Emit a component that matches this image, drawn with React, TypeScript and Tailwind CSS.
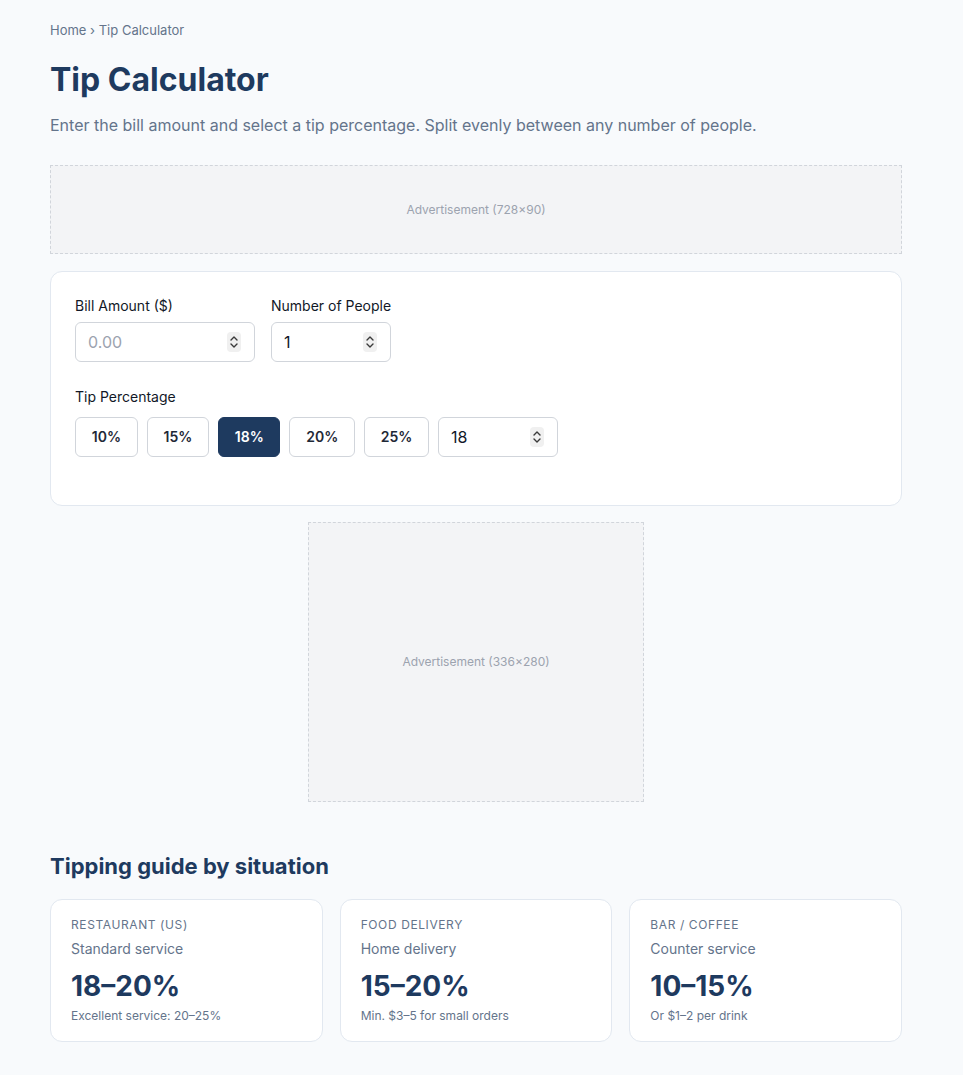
const tips = ['10%', '15%', '18%', '20%', '25%']

const guides = [
  { label: 'Restaurant (US)', sub: 'Standard service', range: '18–20%', note: 'Excellent service: 20–25%' },
  { label: 'Food delivery', sub: 'Home delivery', range: '15–20%', note: 'Min. $3–5 for small orders' },
  { label: 'Bar / coffee', sub: 'Counter service', range: '10–15%', note: 'Or $1–2 per drink' },
]

function Spinner() {
  return (
    <span className="absolute right-[14px] top-1/2 -translate-y-1/2 flex items-center justify-center w-[14px] h-[20px] rounded-[4px] bg-[#f0f0f0]">
      <svg width="12" height="16" viewBox="0 0 12 16" fill="none" stroke="#3a3a3a" strokeWidth="1.4" strokeLinecap="round" strokeLinejoin="round">
        <path d="M3 6 L6 3 L9 6" />
        <path d="M3 10 L6 13 L9 10" />
      </svg>
    </span>
  )
}

function NumberField({ value, placeholder, width }: { value?: string; placeholder?: string; width: string }) {
  return (
    <div className={`relative ${width} h-10`}>
      <input
        type="text"
        readOnly
        value={value ?? ''}
        placeholder={placeholder}
        className="w-full h-full rounded-md border border-[#d1d5db] bg-white pl-3 pr-8 text-base text-[#111827] placeholder:text-[#9ca3af] outline-none"
      />
      <Spinner />
    </div>
  )
}

export default function App() {
  return (
    <div className="min-h-screen bg-[#f8fafc] font-['Inter',sans-serif]">
      <div className="w-[852px] ml-[50px] pt-[21px] pb-8">
        {/* Breadcrumb */}
        <div className="text-[13px] leading-[18px] text-[#64748b]">Home › Tip Calculator</div>

        <h1 className="mt-[21px] text-[32px] leading-[40px] font-bold text-[#1e3a5f]">Tip Calculator</h1>
        <p className="mt-[13px] text-base leading-6 text-[#64748b]">
          Enter the bill amount and select a tip percentage. Split evenly between any number of people.
        </p>

        {/* Top ad */}
        <div className="mt-[28px] h-[89px] flex items-center justify-center border border-dashed border-[#d1d5db] bg-[#f3f4f6] text-xs text-[#9ca3af]">
          Advertisement (728×90)
        </div>

        {/* Calculator card */}
        <div className="mt-[17px] bg-white border border-[#e2e8f0] rounded-xl px-6 pt-6 pb-12">
          <div className="flex gap-4">
            <div>
              <label className="block text-sm leading-5 text-[#111827] mb-1.5">Bill Amount ($)</label>
              <NumberField placeholder="0.00" width="w-[180px]" />
            </div>
            <div>
              <label className="block text-sm leading-5 text-[#111827] mb-1.5">Number of People</label>
              <NumberField value="1" width="w-[120px]" />
            </div>
          </div>

          <div className="mt-[25px]">
            <label className="block text-sm leading-5 text-[#111827] mb-2.5">Tip Percentage</label>
            <div className="flex gap-[9px]">
              {tips.map(t => (
                <button
                  key={t}
                  className={
                    t === '18%'
                      ? 'h-10 px-[15.75px] rounded-md border border-[#1e3a5f] bg-[#1e3a5f] text-white text-sm font-semibold'
                      : 'h-10 px-[15.75px] rounded-md border border-[#d1d5db] bg-white text-[#1f2937] text-sm font-semibold'
                  }
                >
                  {t}
                </button>
              ))}
              <NumberField value="18" width="w-[120px]" />
            </div>
          </div>
        </div>

        {/* Middle ad */}
        <div className="mt-4 mx-auto w-[336px] h-[280px] flex items-center justify-center border border-dashed border-[#d1d5db] bg-[#f3f4f6] text-xs text-[#9ca3af]">
          Advertisement (336×280)
        </div>

        {/* Guide */}
        <h2 className="mt-[50px] text-[22px] leading-7 font-bold text-[#1e3a5f]">Tipping guide by situation</h2>
        <div className="mt-[19px] grid grid-cols-3 gap-[17px]">
          {guides.map(g => (
            <div key={g.label} className="bg-white border border-[#e2e8f0] rounded-xl px-5 pt-[17px] pb-[17px]">
              <div className="text-xs leading-4 uppercase tracking-[0.6px] text-[#64748b]">{g.label}</div>
              <div className="mt-[6px] text-sm leading-5 text-[#64748b]">{g.sub}</div>
              <div className="mt-[9px] text-[28px] leading-9 font-bold text-[#1e3a5f]">{g.range}</div>
              <div className="mt-1 text-xs leading-4 text-[#64748b]">{g.note}</div>
            </div>
          ))}
        </div>
      </div>
    </div>
  )
}
